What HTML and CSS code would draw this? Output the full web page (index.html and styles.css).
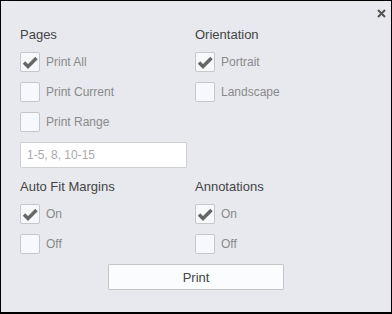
FILE: index.html
```html
<!DOCTYPE html>
<html lang="en">
<head>
    <meta charset="UTF-8">
    <title>Print</title>
    <link rel="stylesheet" href="styles.css">
</head>
<body>
    <div class="dialog">
        <button class="close" aria-label="Close">
            <svg width="9" height="9" viewBox="0 0 9 9"><path d="M1 1L8 8M8 1L1 8" stroke="#555" stroke-width="2"/></svg>
        </button>

        <div class="grid">
            <div class="group">
                <div class="title">Pages</div>
                <label class="opt"><span class="box checked"></span>Print All</label>
                <label class="opt"><span class="box"></span>Print Current</label>
                <label class="opt"><span class="box"></span>Print Range</label>
                <input class="range" type="text" placeholder="1-5, 8, 10-15">
            </div>
            <div class="group">
                <div class="title">Orientation</div>
                <label class="opt"><span class="box checked"></span>Portrait</label>
                <label class="opt"><span class="box"></span>Landscape</label>
            </div>
            <div class="group">
                <div class="title">Auto Fit Margins</div>
                <label class="opt"><span class="box checked"></span>On</label>
                <label class="opt"><span class="box"></span>Off</label>
            </div>
            <div class="group">
                <div class="title">Annotations</div>
                <label class="opt"><span class="box checked"></span>On</label>
                <label class="opt"><span class="box"></span>Off</label>
            </div>
        </div>

        <div class="actions">
            <button class="print">Print</button>
        </div>
    </div>
</body>
</html>
```

FILE: styles.css
```css
body {
    margin: 0;
    font-family: "Liberation Sans", Arial, sans-serif;
}
.dialog {
    position: relative;
    box-sizing: border-box;
    width: 392px;
    height: 314px;
    border: 1px solid #000;
    border-bottom-width: 2px;
    background: #e8e9ee;
    padding: 26px 0 0 19px;
}
.close {
    position: absolute;
    top: 8px;
    right: 5px;
    width: 9px;
    height: 9px;
    padding: 0;
    border: none;
    background: none;
    display: flex;
    cursor: pointer;
}
.grid {
    display: grid;
    grid-template-columns: 175px 175px;
    row-gap: 11px;
}
.group {
    display: flex;
    flex-direction: column;
    gap: 10px;
}
.title {
    font-size: 13px;
    line-height: 16px;
    color: #444;
    margin-bottom: -1px;
}
.opt {
    display: flex;
    align-items: center;
    gap: 6px;
    height: 20px;
    font-size: 12px;
    color: #8a8a8a;
}
.box {
    box-sizing: border-box;
    width: 20px;
    height: 20px;
    border: 1px solid #c6c7cb;
    border-radius: 2px;
    background: #f7f8fb;
}
.box.checked {
    background: #f7f8fb url("data:image/svg+xml,%3Csvg xmlns='http://www.w3.org/2000/svg' width='18' height='18'%3E%3Cpath d='M3 9.5L7 13.5L15.5 5' fill='none' stroke='%23666' stroke-width='3.4'/%3E%3C/svg%3E") no-repeat center;
}
.range {
    box-sizing: border-box;
    width: 167px;
    height: 26px;
    margin: 0;
    padding: 0 6px;
    border: 1px solid #cfd0d4;
    border-radius: 1px;
    background: #fff;
    font-family: inherit;
    font-size: 12px;
}
.range::placeholder {
    color: #aaa;
}
.actions {
    display: flex;
    justify-content: center;
    margin: 10px 0 0 -19px;
}
.print {
    width: 176px;
    height: 26px;
    border: 1px solid #c3c4c8;
    border-radius: 1px;
    background: #fbfcfe;
    font-family: inherit;
    font-size: 13px;
    color: #444;
    cursor: pointer;
}
```
